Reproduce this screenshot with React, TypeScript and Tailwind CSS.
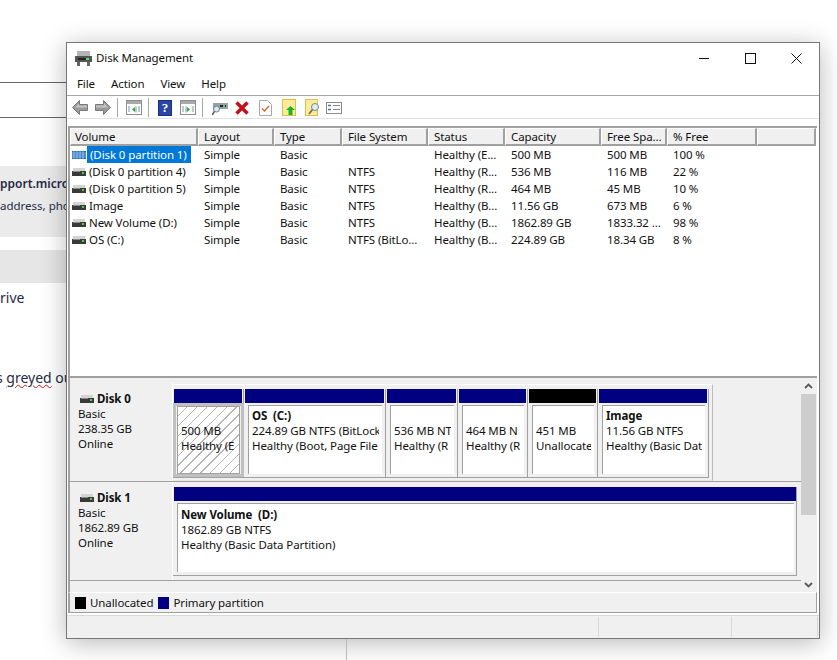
import React from 'react';

const font = "font-['Noto_Sans','Open_Sans',sans-serif]";

function DiskIcon({ hatched = false }: { hatched?: boolean }) {
  return (
    <svg width="14" height="8" viewBox="0 0 14 8" className="block shrink-0">
      {hatched ? (
        <>
          <rect width="14" height="8" fill="#1c68bd" />
          <path d="M0 2h14M0 4h14M0 6h14M2 0v8M5 0v8M8 0v8M11 0v8" stroke="#cfe3f7" strokeWidth="0.6" />
        </>
      ) : (
        <>
          <rect x="1" width="12" height="3" fill="#d4d4d4" />
          <rect y="3" width="14" height="5" fill="#3a3a3a" />
          <rect x="10" y="4" width="2" height="2" fill="#3fd63f" />
          <rect x="1" y="3" width="7" height="1" fill="#8a8a8a" />
        </>
      )}
    </svg>
  );
}

function Arrow({ flip = false }: { flip?: boolean }) {
  return (
    <svg width="16" height="15" viewBox="0 0 16 15" className={flip ? 'block -scale-x-100' : 'block'}>
      <path d="M7.500.5 .5 7.500l7 7v-4h8v-6h-8z" fill="#9b9b9b" stroke="#7a7a7a" />
      <path d="M7 3.500 3 7.500h12v-2H7z" fill="#c6c6c6" />
    </svg>
  );
}

function PaneIcon({ right = false }: { right?: boolean }) {
  return (
    <svg width="16" height="15" viewBox="0 0 16 15" className="block">
      <rect x="0.5" y="0.5" width="15" height="14" fill="#fff" stroke="#8d8d8d" />
      <rect x="1" y="1" width="14" height="3" fill="#a9a9a9" />
      <path d={right ? 'M6 6.500v6M2 7h2M2 9h2M2 11h2M12 7h2M12 9h2M12 11h2' : 'M10 6.500v6M2 7h2M2 9h2M2 11h2M12 7h2M12 9h2M12 11h2'} stroke="#7b94ad" />
      <path d={right ? 'M7 7l3 2.500L7 12z' : 'M9 7 6 9.500 9 12z'} fill="#1fb02c" />
    </svg>
  );
}

function Sep({ className }: { className: string }) {
  return <div className={`w-px h-[19px] bg-[#a8a8a8] ${className}`} />;
}

function Toolbar() {
  return (
    <div className="h-[21px] flex items-center pl-[5px] pt-px border-b border-[#e3e3e3] box-content">
      <Arrow />
      <div className="ml-[7px]"><Arrow flip /></div>
      <Sep className="ml-[6px]" />
      <div className="ml-[8px]"><PaneIcon /></div>
      <Sep className="ml-[6px]" />
      <div className="ml-[9px] w-[14px] h-[16px] bg-[#2a45a8] border border-[#18307e] text-white text-[13px] leading-[14px] font-bold text-center font-['Liberation_Serif',serif]">?</div>
      <div className="ml-[8px]"><PaneIcon right /></div>
      <Sep className="ml-[6px]" />
      <svg width="16" height="16" viewBox="0 0 16 16" className="block ml-[9px]">
        <rect x="1" y="3" width="15" height="6" fill="#9aa0a6" />
        <rect x="8" y="5" width="6" height="2" fill="#222" />
        <rect x="11" y="5" width="2" height="2" fill="#45dd45" />
        <circle cx="4.500" cy="9" r="3" fill="#dbe8f3" stroke="#6b7d8c" />
        <path d="M2.500 11.500 0 15" stroke="#555" strokeWidth="1.500" />
      </svg>
      <svg width="14" height="14" viewBox="0 0 14 14" className="block ml-[7px]">
        <path d="M1.500 1.500 12.500 12.500M12.500 1.500 1.500 12.500" stroke="#c8101a" strokeWidth="3.400" />
      </svg>
      <svg width="13" height="16" viewBox="0 0 13 16" className="block ml-[10px]">
        <path d="M.5.5h8l4 4v11H.5z" fill="#fff" stroke="#a8a8a8" />
        <path d="M3 8.500 5.500 11 10 6" fill="none" stroke="#e0632a" strokeWidth="1.400" />
      </svg>
      <svg width="14" height="17" viewBox="0 0 14 17" className="block ml-[10px]">
        <rect x="0.500" y="0.500" width="13" height="16" fill="#fdeb9c" stroke="#e2bd45" />
        <path d="M8.500 7 13 11h-2.500v5h-4v-5H4z" fill="#14b52a" />
      </svg>
      <svg width="15" height="17" viewBox="0 0 15 17" className="block ml-[9px]">
        <rect x="0.500" y="0.500" width="12" height="16" fill="#fdeb9c" stroke="#e2bd45" />
        <circle cx="10" cy="8" r="3.500" fill="#e4eef5" stroke="#73828e" />
        <path d="M7.500 10.500 4 15" stroke="#666" strokeWidth="1.500" />
      </svg>
      <svg width="16" height="12" viewBox="0 0 16 12" className="block ml-[6px]">
        <rect x="0.500" y="0.500" width="15" height="11" fill="#fff" stroke="#8b8b8b" />
        <path d="M2 3.500h3M2 7.500h3" stroke="#3b78c2" strokeWidth="1.500" />
        <path d="M7 3.500h7M7 7.500h7" stroke="#8b8b8b" />
      </svg>
    </div>
  );
}

const cols = ['Volume', 'Layout', 'Type', 'File System', 'Status', 'Capacity', 'Free Spa...', '% Free', ''];
const grid = 'grid grid-cols-[128px_76px_68px_86px_77px_96px_66px_90px_59px]';

const rows = [
  ['(Disk 0 partition 1)', 'Simple', 'Basic', '', 'Healthy (E...', '500 MB', '500 MB', '100 %'],
  ['(Disk 0 partition 4)', 'Simple', 'Basic', 'NTFS', 'Healthy (R...', '536 MB', '116 MB', '22 %'],
  ['(Disk 0 partition 5)', 'Simple', 'Basic', 'NTFS', 'Healthy (R...', '464 MB', '45 MB', '10 %'],
  ['Image', 'Simple', 'Basic', 'NTFS', 'Healthy (B...', '11.56 GB', '673 MB', '6 %'],
  ['New Volume (D:)', 'Simple', 'Basic', 'NTFS', 'Healthy (B...', '1862.89 GB', '1833.32 ...', '98 %'],
  ['OS (C:)', 'Simple', 'Basic', 'NTFS (BitLo...', 'Healthy (B...', '224.89 GB', '18.34 GB', '8 %'],
];

function VolumeList() {
  return (
    <div className="h-[252px] mt-[7px] ml-px mr-[2px] border-t-2 border-l-2 border-[#a0a0a0] border-b-2 bg-white overflow-hidden">
      <div className={`${grid} h-[18px]`}>
        {cols.map((c, i) => (
          <div key={i} className={`bg-[#f0f0f0] border-t border-l border-white border-r-2 border-b-2 border-r-[#a0a0a0] border-b-[#a0a0a0] leading-[15px] whitespace-nowrap ${i === 0 ? 'pl-[4px]' : 'pl-[5px]'}`}>
            {c}
          </div>
        ))}
      </div>
      {rows.map((r, i) => (
        <div key={i} className={`${grid} h-[17px] leading-[17px]`}>
          <div className="flex items-center pl-[2px] whitespace-nowrap">
            <DiskIcon hatched={i === 0} />
            <span className={`pl-[3px] ${i === 0 ? 'bg-[#0078d7] text-white w-[104px] shrink-0 ml-[1px] pl-[2px]' : ''}`}>{r[0]}</span>
          </div>
          {r.slice(1).map((v, j) => (
            <div key={j} className="pl-[6px] whitespace-nowrap overflow-hidden">{v}</div>
          ))}
        </div>
      ))}
    </div>
  );
}

type Part = { id: string; w: string; head: string; title?: string; lines: string[]; hatch?: boolean };

// text is what fits in each box, the console cuts it off the same way
const parts: Part[] = [
  { id: 'efi', w: 'w-[71px]', head: 'bg-[#000080]', lines: ['500 MB', 'Healthy (E'], hatch: true },
  { id: 'os', w: 'w-[142px]', head: 'bg-[#000080]', title: 'OS  (C:)', lines: ['224.89 GB NTFS (BitLock', 'Healthy (Boot, Page File'] },
  { id: 'p4', w: 'w-[72px]', head: 'bg-[#000080]', lines: ['536 MB NT', 'Healthy (R'] },
  { id: 'p5', w: 'w-[70px]', head: 'bg-[#000080]', lines: ['464 MB N', 'Healthy (R'] },
  { id: 'free', w: 'w-[70px]', head: 'bg-black', lines: ['451 MB', 'Unallocate'] },
  { id: 'img', w: 'w-[111px]', head: 'bg-[#000080]', title: 'Image', lines: ['11.56 GB NTFS', 'Healthy (Basic Dat'] },
];

function Partition({ p }: { p: Part }) {
  return (
    <div className={`${p.w} shrink-0 h-[89px] flex flex-col border-r border-b border-[#a0a0a0]`}>
      <div className={`${p.head} h-[14px] ml-px mr-px shrink-0`} />
      {p.hatch ? (
        <div className="flex-1 border-[3px] border-[#c0c0c0] -mr-px min-h-0">
          <div className="h-full mx-px border border-[#a0a0a0] bg-white bg-[repeating-linear-gradient(135deg,transparent_0,transparent_6px,#b4b4b4_6px,#b4b4b4_7px)] pl-[3px] pt-px overflow-hidden whitespace-nowrap">
            <div className="h-[15px]" />
            {p.lines.map(l => <div key={l} className="leading-[15px]">{l}</div>)}
          </div>
        </div>
      ) : (
        <div className="flex-1 pl-[4px] pr-[3px] pt-[2px] pb-[3px] min-h-0">
          <div className="h-full bg-white border-t border-l border-[#a0a0a0] pl-[3px] pt-[2px] pr-[3px]">
            <div className="overflow-hidden whitespace-pre">
              {p.title ? <div className="leading-[15px] font-bold">{p.title}</div> : <div className="h-[15px]" />}
              {p.lines.map(l => <div key={l} className="leading-[15px]">{l}</div>)}
            </div>
          </div>
        </div>
      )}
    </div>
  );
}

function DiskLabel({ name, size }: { name: string; size: string }) {
  return (
    <div className="w-[103px] shrink-0 pl-[8px] pt-[8px] border-r border-white">
      <div className="flex items-center gap-[3px] h-[15px] pl-[2px]">
        <DiskIcon />
        <span className="font-bold">{name}</span>
      </div>
      <div className="leading-[15px]">Basic</div>
      <div className="leading-[15px]">{size}</div>
      <div className="leading-[15px]">Online</div>
    </div>
  );
}

function GraphicPane() {
  return (
    <div className="h-[215px] flex bg-[#f0f0f0] ml-px mr-[2px] border-l-2 border-[#a0a0a0]">
      <div className="flex-1 pt-[5px] min-w-0">
        <div className="h-[99px] flex border-b border-[#a0a0a0]">
          <DiskLabel name="Disk 0" size="238.35 GB" />
          <div className="flex-1 pt-[1px]">
            <div className="w-[540px] h-[97px] border-t border-white border-r border-r-[#bdbdbd] border-b border-b-[#e8e8e8] pt-[4px]">
              <div className="flex">
                {parts.map(p => <Partition key={p.id} p={p} />)}
              </div>
            </div>
          </div>
        </div>
        <div className="h-[99px] flex border-b border-[#a0a0a0]">
          <DiskLabel name="Disk 1" size="1862.89 GB" />
          <div className="flex-1 pt-[5px]">
            <div className="w-[624px] h-[89px] flex flex-col border-r border-b border-[#a0a0a0]">
              <div className="h-[14px] bg-[#000080] ml-px shrink-0" />
              <div className="flex-1 pl-[4px] pr-[2px] pt-[2px] pb-[3px]">
                <div className="h-full bg-white border-t border-l border-[#a0a0a0] pl-[3px] pt-[3px] whitespace-pre">
                  <div className="leading-[15px] font-bold">New Volume  (D:)</div>
                  <div className="leading-[15px]">1862.89 GB NTFS</div>
                  <div className="leading-[15px]">Healthy (Basic Data Partition)</div>
                </div>
              </div>
            </div>
          </div>
        </div>
      </div>
      <div className="w-[15px] mr-px shrink-0 flex flex-col items-center">
        <svg width="9" height="6" viewBox="0 0 9 6" className="mt-[5px] mb-[5px]"><path d="M1 5l3.500-3.500L8 5" fill="none" stroke="#5a5a5a" strokeWidth="1.800" /></svg>
        <div className="w-full h-[121px] bg-[#cdcdcd]" />
        <div className="flex-1" />
        <svg width="9" height="6" viewBox="0 0 9 6" className="mb-[5px]"><path d="M1 1l3.500 3.500L8 1" fill="none" stroke="#5a5a5a" strokeWidth="1.800" /></svg>
      </div>
    </div>
  );
}

function DiskWindow() {
  return (
    <div className={`absolute left-[66px] top-[42px] w-[754px] h-[597px] flex flex-col bg-white border border-[#777] shadow-[0_4px_24px_rgba(0,0,0,0.28)] text-[11.500px] tracking-[-0.1px] text-[#111] ${font}`}>
      <div className="h-[30px] shrink-0 flex items-center pl-[8px]">
        <svg width="17" height="15" viewBox="0 0 17 15" className="block">
          <rect x="2" y="0" width="13" height="5" fill="#b4b4b4" />
          <rect x="0" y="5" width="17" height="6" fill="#555" />
          <rect x="3" y="7" width="11" height="2" fill="#222" />
          <rect x="11" y="7" width="3" height="2" fill="#4fe04f" />
          <rect x="2" y="11" width="3" height="4" fill="#666" />
          <rect x="12" y="11" width="3" height="4" fill="#666" />
        </svg>
        <span className="ml-[4px]">Disk Management</span>
        <div className="ml-auto flex items-center">
          <svg width="11" height="11" viewBox="0 0 11 11" className="block mr-[35px]"><path d="M0 5.500h10" stroke="#111" /></svg>
          <svg width="11" height="11" viewBox="0 0 11 11" className="block mr-[35px]"><rect x="0.500" y="0.500" width="10" height="10" fill="none" stroke="#111" /></svg>
          <svg width="11" height="11" viewBox="0 0 11 11" className="block mr-[17px]"><path d="M.5.5l10 10M10.500.5l-10 10" stroke="#111" /></svg>
        </div>
      </div>
      <div className="h-[23px] shrink-0 flex items-center gap-[16px] pl-[10px] border-b border-[#a6a6ac]">
        <span>File</span>
        <span>Action</span>
        <span>View</span>
        <span>Help</span>
      </div>
      <Toolbar />
      <VolumeList />
      <GraphicPane />
      <div className="h-[21px] shrink-0 -mt-[1px] ml-px bg-[#f0f0f0] border-l-2 border-[#a0a0a0] border-t border-t-white flex items-center pl-[5px] border-r border-r-[#a0a0a0] border-b border-b-[#a0a0a0] mr-[2px]">
        <div className="w-[11px] h-[12px] bg-black" />
        <span className="ml-[4px] pt-px">Unallocated</span>
        <div className="ml-[5px] w-[11px] h-[12px] bg-[#000080]" />
        <span className="ml-[4px] pt-px">Primary partition</span>
      </div>
      <div className="flex-1 mt-[2px] bg-[#f0f0f0] border-t border-[#d9d9d9] flex justify-end pr-[1px]">
        <div className="w-[133px] my-[1px] border-l border-[#d9d9d9]" />
        <div className="w-[87px] my-[1px] border-l border-r border-[#d9d9d9]" />
      </div>
    </div>
  );
}

export default function App() {
  return (
    <div className={`relative w-[837px] h-[660px] bg-white overflow-hidden ${font}`}>
      {/* page behind the window */}
      <div className="w-[67px] overflow-hidden whitespace-nowrap text-[#1f2a44]">
        <div className="h-[82px]" />
        <div className="h-[36px] border-t border-b border-[#666]" />
        <div className="h-[48px]" />
        <div className="h-[71px] bg-[#ebebeb] pt-[9px]">
          <div className="text-[12px] leading-[18px] font-semibold">pport.micro</div>
          <div className="text-[11.500px] leading-[18px] mt-[4px]">address, pho</div>
        </div>
        <div className="h-[13px]" />
        <div className="h-[33px] bg-[#e6e6e6]" />
        <div className="text-[14px] leading-[20px] mt-[5px]">rive</div>
        <div className="mt-[60px] -ml-[4px] text-[14px] leading-[20px]">
          s <span className="underline decoration-wavy decoration-[#d01010] decoration-1">greyed</span> ou
        </div>
      </div>
      <DiskWindow />
      <div className="absolute left-[346px] top-[639px] w-px h-[21px] bg-[#bbb]" />
    </div>
  );
}
